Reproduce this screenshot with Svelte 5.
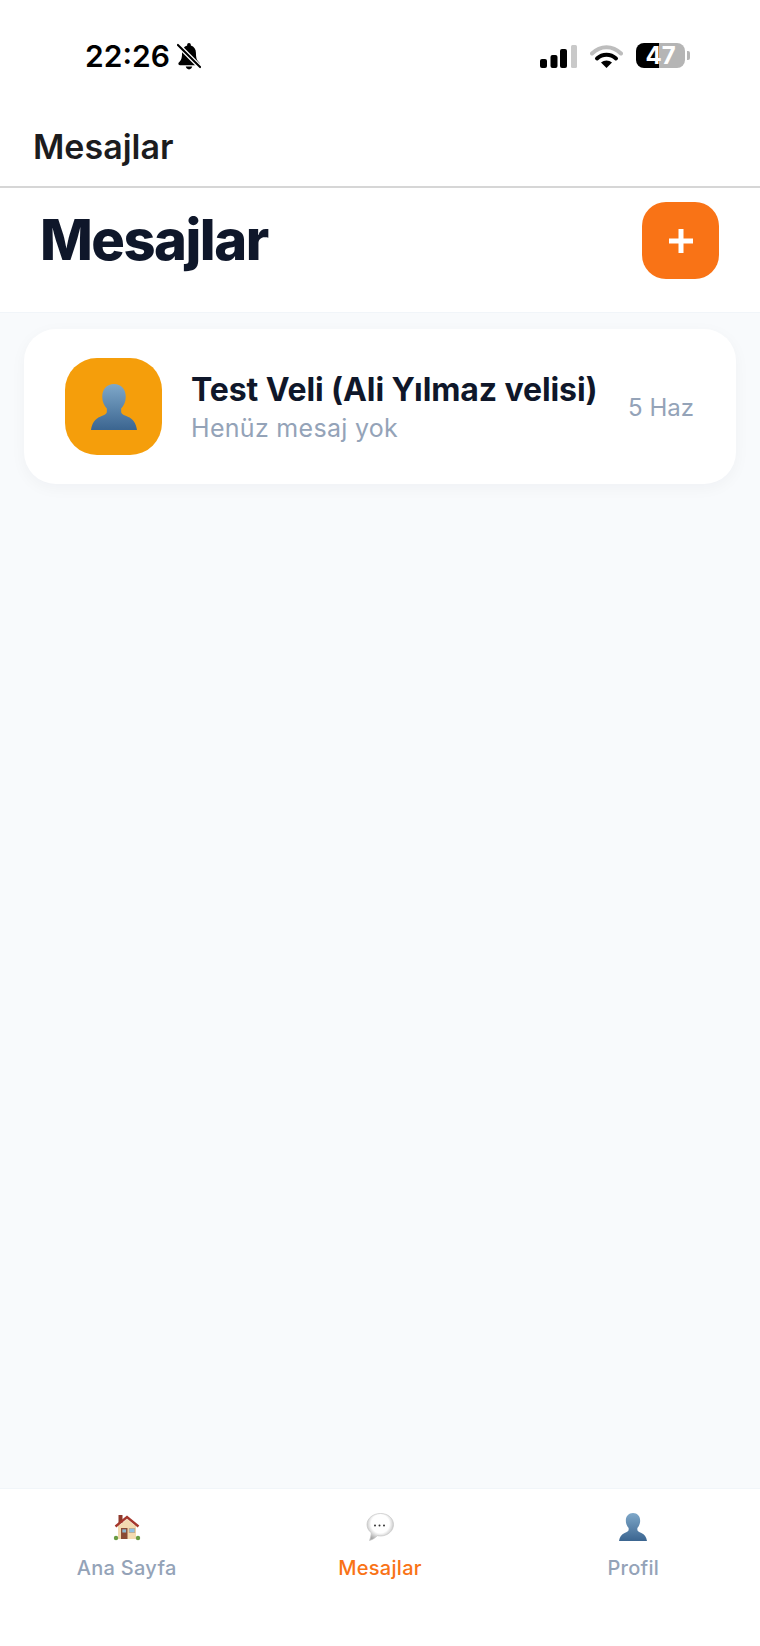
<script>
  let threads = [{ name: 'Test Veli (Ali Yılmaz velisi)', last: 'Henüz mesaj yok', date: '5 Haz' }]
</script>

{#snippet person(cls)}
  <svg class={cls} viewBox="0 0 45 45">
    <defs>
      <linearGradient id="bust" x1="0" y1="0" x2="0" y2="1">
        <stop offset="0" stop-color="#7fa8c9" />
        <stop offset="1" stop-color="#3b6590" />
      </linearGradient>
    </defs>
    <path fill="url(#bust)" d="M22.500 0C15.500 0 11 5 11 12.500c0 5 2 9 4.500 11.500v3c0 2.500-2.500 3.500-6.500 5C4 34 1 38 0 45h45c-1-7-4-11-9-13-4-1.500-6.500-2.500-6.500-5v-3c2.500-2.500 4.500-6.500 4.500-11.500C34 5 29.500 0 22.500 0z" />
  </svg>
{/snippet}

<div class="screen">
  <div class="status">
    <div class="clock">
      <span class="time">22:26</span>
      <svg class="bell" viewBox="0 0 26 30">
        <path d="M13 1c-1.300 0-2 .9-2 2v.6C7.500 4.600 5.500 7.600 5.500 11.500c0 5-.8 7.500-2.300 9.300-.9 1-1.700 1.700-1.700 2.700 0 .9.700 1.500 1.700 1.500h19.600c1 0 1.700-.6 1.700-1.500 0-1-.8-1.700-1.700-2.700-1.500-1.800-2.300-4.300-2.300-9.300 0-3.900-2-6.900-5.500-7.900V3c0-1.100-.7-2-2-2z" />
        <path d="M9.500 26.500c.3 1.700 1.700 3 3.500 3s3.200-1.300 3.500-3z" />
        <path d="M1 3l24 24" stroke="#fff" stroke-width="5" />
        <path d="M1 3l24 24" stroke="#000" stroke-width="2.200" stroke-linecap="round" />
      </svg>
    </div>
    <div class="indicators">
      <svg class="signal" viewBox="0 0 37 23">
        <rect x="0" y="14" width="7" height="9" rx="2" />
        <rect x="10.500" y="10" width="7" height="13" rx="2" />
        <rect x="20" y="4" width="7" height="19" rx="2" />
        <rect x="31" y="0" width="6" height="23" rx="1.500" fill="#c9c9c9" />
      </svg>
      <svg class="wifi" viewBox="0 0 33 24">
        <path d="M2 9.500C10.500 1 22.500 1 31 9.500" fill="none" stroke="#bdbdbd" stroke-width="4" stroke-linecap="round" />
        <path d="M7 14.500c5.500-5 13.500-5 19 0" fill="none" stroke="#000" stroke-width="4" stroke-linecap="round" />
        <path d="M11 18.500c3.200-2.800 7.800-2.800 11 0L16.500 24z" />
      </svg>
      <div class="battery">
        <span class="level">47</span>
      </div>
      <span class="nub"></span>
    </div>
  </div>

  <div class="topbar">Mesajlar</div>

  <header class="head">
    <h1>Mesajlar</h1>
    <button class="add" aria-label="Yeni mesaj">
      <svg viewBox="0 0 26 26"><path d="M13 1v24M1 13h24" stroke="#fff" stroke-width="5" /></svg>
    </button>
  </header>

  <main class="list">
    {#each threads as t}
      <div class="card">
        <div class="avatar">{@render person('bust-lg')}</div>
        <div class="body">
          <div class="name">{t.name}</div>
          <div class="last">{t.last}</div>
        </div>
        <div class="date">{t.date}</div>
      </div>
    {/each}
  </main>

  <nav class="tabs">
    <div class="tab">
      <svg class="ico" viewBox="0 0 28 28">
        <rect x="5.500" y="2" width="4" height="8" fill="#8f3a2c" />
        <rect x="5" y="12" width="18" height="14" fill="#f3dab0" />
        <path d="M14 6 5 13.500V16h18v-2.500z" fill="#f3dab0" />
        <path d="M2.500 13.500 14 4l11.500 9.500" fill="none" stroke="#a5372c" stroke-width="2.400" />
        <rect x="8" y="15" width="6.500" height="11" fill="#8a4a34" />
        <rect x="9.300" y="16.300" width="3.800" height="3.200" fill="#8fb7cf" />
        <rect x="15.800" y="15" width="6.400" height="5" fill="#c9a77c" />
        <rect x="16.500" y="15.700" width="5" height="3.600" fill="#8ec0e4" />
        <circle cx="3" cy="25" r="2.200" fill="#6a9c42" />
        <circle cx="25" cy="25" r="2.200" fill="#6a9c42" />
      </svg>
      <span>Ana Sayfa</span>
    </div>
    <div class="tab active">
      <svg class="ico" viewBox="0 0 28 28">
        <defs>
          <radialGradient id="bubble" cx="0.5" cy="0.38" r="0.62">
            <stop offset="0.55" stop-color="#fff" />
            <stop offset="1" stop-color="#a6a6a6" />
          </radialGradient>
        </defs>
        <path fill="url(#bubble)" stroke="#c6c6c6" stroke-width=".7" d="M14.500 0.500C7 0.500 1 5.500 1 11.500c0 3.500 1.700 6.300 4.300 8.300C5.200 22.500 4.300 25.500 3.500 27.500c3-1 5.800-2.500 7.800-4.800 1 .2 2.100.3 3.200.3C22 23 27.500 17.700 27.500 11.500S22 0.500 14.500 0.500z" />
        <circle cx="9" cy="12.500" r="1" fill="#333" />
        <circle cx="13.500" cy="12.500" r="1" fill="#333" />
        <circle cx="18" cy="12.500" r="1" fill="#333" />
      </svg>
      <span>Mesajlar</span>
    </div>
    <div class="tab">
      {@render person('ico')}
      <span>Profil</span>
    </div>
  </nav>
</div>

<style>
  :global(body) { margin: 0; background: #fff; }
  .screen {
    width: 760px;
    height: 1646px;
    display: flex;
    flex-direction: column;
    font-family: Inter, "Liberation Sans", sans-serif;
    background: #f8fafc;
    overflow: hidden;
  }
  .status {
    height: 108px;
    background: #fff;
    display: flex;
    justify-content: space-between;
    align-items: flex-start;
    padding: 0 70px 0 85px;
    box-sizing: border-box;
  }
  .clock { display: flex; align-items: center; gap: 7px; margin-top: 38px; }
  .time { font-size: 30px; font-weight: 600; line-height: 36px; color: #000; }
  .bell { width: 24px; height: 28px; margin-top: -1px; }
  .indicators { display: flex; align-items: center; margin-top: 43px; height: 25px; }
  .signal { width: 37px; height: 23px; margin-top: 1px; margin-right: 1px; }
  .wifi { width: 33px; height: 24px; margin-left: 12px; }
  .battery {
    width: 49px;
    height: 25px;
    margin-left: 13px;
    border-radius: 8px;
    background: linear-gradient(90deg, #000 47%, #b5b5b5 47%);
    display: flex;
    align-items: center;
    justify-content: center;
  }
  .level { font-size: 24px; font-weight: 700; color: #fff; line-height: 25px; }
  .nub { width: 3px; height: 9px; margin-left: 2px; background: #b5b5b5; border-radius: 0 2px 2px 0; }
  .topbar {
    height: 80px;
    box-sizing: border-box;
    background: #fff;
    border-bottom: 2px solid #d6d6d6;
    padding: 19px 33px 0;
    font-size: 34px;
    line-height: 40px;
    font-weight: 600;
    color: #1c1c1e;
  }
  .head {
    background: #fff;
    height: 125px;
    box-sizing: border-box;
    border-bottom: 1px solid #f1f5f9;
    display: flex;
    justify-content: space-between;
    align-items: flex-start;
    padding: 14px 41px 0 40px;
  }
  h1 {
    margin: 6px 0 0;
    font-size: 56px;
    line-height: 64px;
    font-weight: 800;
    letter-spacing: -1.500px;
    color: #0f172a;
  }
  .add {
    width: 77px;
    height: 77px;
    border: 0;
    padding: 0;
    border-radius: 24px;
    background: #f97316;
    display: flex;
    align-items: center;
    justify-content: center;
  }
  .add svg { width: 26px; height: 26px; }
  .list { flex: 1; padding: 16px 24px 0; }
  .card {
    height: 155px;
    box-sizing: border-box;
    background: #fff;
    border-radius: 32px;
    box-shadow: 0 4px 16px rgba(15, 23, 42, 0.04);
    display: flex;
    align-items: center;
    padding: 0 42px 0 41px;
  }
  .avatar {
    width: 97px;
    height: 97px;
    border-radius: 32px;
    background: #f59e0b;
    display: flex;
    align-items: center;
    justify-content: center;
    flex: none;
  }
  .bust-lg { width: 46px; height: 46px; }
  .body { flex: 1; margin-left: 29px; padding-top: 1px; }
  .name { font-size: 32px; line-height: 38px; font-weight: 700; letter-spacing: -0.100px; color: #0f172a; }
  .last { font-size: 25px; line-height: 32px; letter-spacing: 0.300px; color: #94a3b8; margin-top: 3px; }
  .date { font-size: 24px; color: #94a3b8; margin-top: 2px; }
  .tabs {
    height: 158px;
    box-sizing: border-box;
    background: #fff;
    border-top: 1px solid #f1f5f9;
    display: flex;
    align-items: flex-start;
    padding-top: 24px;
  }
  .tab {
    flex: 1;
    display: flex;
    flex-direction: column;
    align-items: center;
    font-size: 20px;
    line-height: 26px;
    font-weight: 500;
    letter-spacing: 0.300px;
    color: #94a3b8;
  }
  .tab.active { color: #f97316; }
  .ico { width: 28px; height: 28px; margin-bottom: 14px; }
</style>
